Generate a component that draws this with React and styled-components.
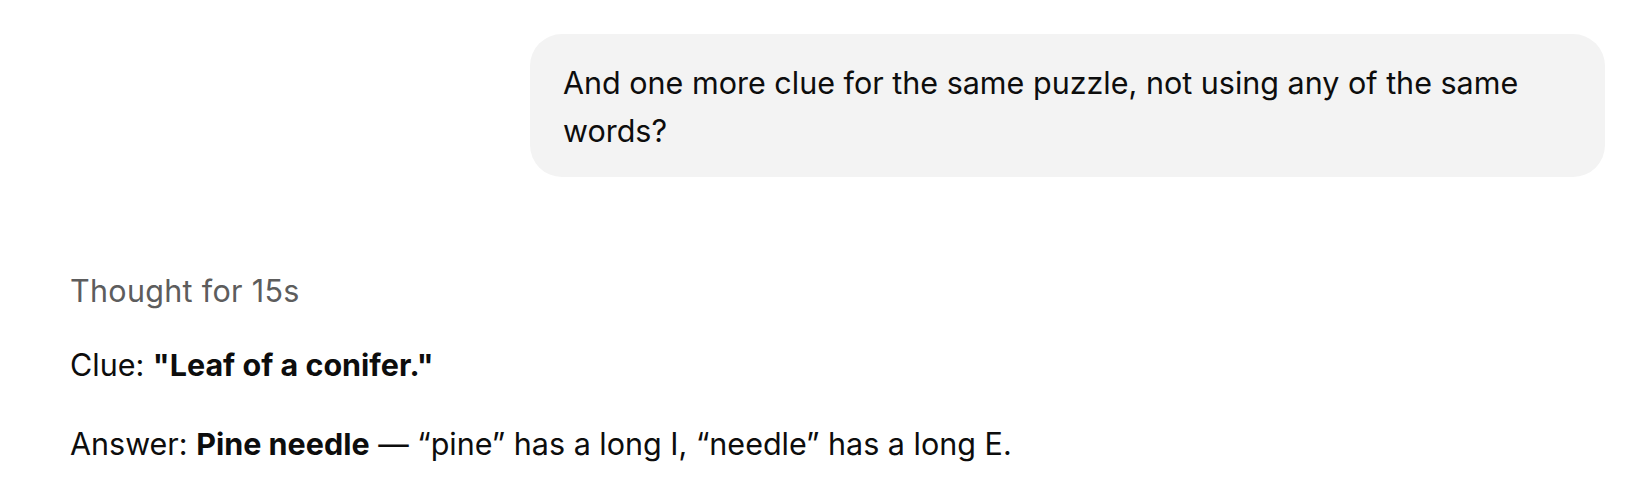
import React from "react";
import styled, { createGlobalStyle } from "styled-components";

const Global = createGlobalStyle`
  html, body { margin: 0; padding: 0; background: #ffffff; }
  body {
    font-family: Inter, "Noto Sans", "Liberation Sans", sans-serif;
    color: #0d0d0d;
    -webkit-font-smoothing: antialiased;
  }
`;

const Thread = styled.div`
  display: flex;
  flex-direction: column;
  padding: 34px 33px 0 70px;
`;

const UserRow = styled.div`
  display: flex;
  justify-content: flex-end;
`;

const Bubble = styled.div`
  max-width: 1009px;
  background: #f3f3f3;
  border-radius: 32px;
  padding: 25px 33px 22px;
  font-size: 30.5px;
  line-height: 48px;
  color: #0d0d0d;
`;

const Assistant = styled.div`
  display: flex;
  flex-direction: column;
  margin-top: 90px;
  font-size: 30.5px;
  line-height: 48px;
`;

const Thought = styled.div`
  color: #5d5d5d;
  letter-spacing: 0.3px;
`;

const Para = styled.p`
  margin: ${(p) => p.$top}px 0 0;
`;

export default function App() {
  return (
    <>
      <Global />
      <Thread>
        <UserRow>
          <Bubble>
            And one more clue for the same puzzle, not using any of the same words?
          </Bubble>
        </UserRow>
        <Assistant>
          <Thought>Thought for 15s</Thought>
          <Para $top={26}>
            Clue: <strong>"Leaf of a conifer."</strong>
          </Para>
          <Para $top={31}>
            Answer: <strong>Pine needle</strong> — “pine” has a long I, “needle” has a long E.
          </Para>
        </Assistant>
      </Thread>
    </>
  );
}
